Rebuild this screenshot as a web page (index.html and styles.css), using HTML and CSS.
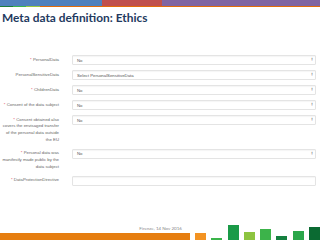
FILE: index.html
```html
<!DOCTYPE html>
<html lang="en">
<head>
    <meta charset="UTF-8">
    <meta name="viewport" content="width=device-width, initial-scale=1.0">
    <title>Meta data definition: Ethics</title>
    <link rel="stylesheet" href="styles.css">
</head>
<body>
    <div class="slide">
        <div class="topbar">
            <div class="seg blue"></div>
            <div class="seg red"></div>
            <div class="seg purple"></div>
        </div>
        <div class="underline">
            <div class="ul-green"></div>
            <div class="ul-orange"></div>
        </div>

        <h1 class="title">Meta data definition: Ethics</h1>

        <div class="form">
            <div class="row">
                <label class="lbl"><span class="req">*</span> PersonalData</label>
                <div class="field select">No<span class="arrows">&#x2BC5;<br>&#x2BC6;</span></div>
            </div>
            <div class="row">
                <label class="lbl">PersonalSensitiveData</label>
                <div class="field select">Select PersonalSensitiveData<span class="arrows">&#x2BC5;<br>&#x2BC6;</span></div>
            </div>
            <div class="row">
                <label class="lbl"><span class="req">*</span> ChildrenData</label>
                <div class="field select">No<span class="arrows">&#x2BC5;<br>&#x2BC6;</span></div>
            </div>
            <div class="row">
                <label class="lbl"><span class="req">*</span> Consent of the data subject</label>
                <div class="field select">No<span class="arrows">&#x2BC5;<br>&#x2BC6;</span></div>
            </div>
            <div class="row">
                <label class="lbl"><span class="req">*</span> Consent obtained also<br>covers the envisaged transfer<br>of the personal data outside<br>the EU</label>
                <div class="field select">No<span class="arrows">&#x2BC5;<br>&#x2BC6;</span></div>
            </div>
            <div class="row">
                <label class="lbl"><span class="req">*</span> Personal data was<br>manifestly made public by the<br>data subject</label>
                <div class="field select">No<span class="arrows">&#x2BC5;<br>&#x2BC6;</span></div>
            </div>
            <div class="row">
                <label class="lbl"><span class="req">*</span> DataProtectionDirective</label>
                <div class="field text"></div>
            </div>
        </div>

        <div class="footer">
            <div class="footer-left">
                <p class="date">Firenze, 14 Nov 2016</p>
                <div class="orange-bar"></div>
            </div>
            <div class="bars">
                <div class="bar b1"></div>
                <div class="bar b2"></div>
                <div class="bar b3"></div>
                <div class="bar b4"></div>
                <div class="bar b5"></div>
                <div class="bar b6"></div>
                <div class="bar b7"></div>
                <div class="bar b8"></div>
            </div>
        </div>
    </div>
</body>
</html>
```

FILE: styles.css
```css
body {
    margin: 0;
    background: white;
    font-family: 'Liberation Sans', Arial, sans-serif;
}

.slide {
    width: 320px;
    height: 240px;
    display: flex;
    flex-direction: column;
    overflow: hidden;
}

.topbar {
    display: flex;
    height: 6px;
}

.seg.blue {
    width: 102px;
    background: #4f81bd;
}

.seg.red {
    width: 60px;
    background: #c0504d;
}

.seg.purple {
    flex: 1;
    background: #8064a2;
}

.underline {
    display: flex;
    height: 1px;
}

.ul-green {
    width: 40px;
    background: linear-gradient(to right, #1e7b3a 0 13px, #3cb44b 13px 26px, #9bc93f 26px 40px);
}

.ul-orange {
    flex: 1;
    background: #e36c09;
}

.title {
    margin: 3px 0 0 2px;
    font-family: 'Lato', sans-serif;
    font-weight: bold;
    font-size: 11.9px;
    line-height: 15px;
    color: #1f3a60;
}

.form {
    margin-top: 30px;
    padding: 0 4px 0 1px;
}

.row {
    display: grid;
    grid-template-columns: 58px 1fr;
    column-gap: 13px;
    margin-bottom: 5px;
}

.lbl {
    text-align: right;
    font-size: 4.3px;
    line-height: 6.8px;
    padding-top: 1.5px;
    color: #666;
    white-space: nowrap;
}

.req {
    color: #e0405a;
}

.field {
    height: 8px;
    border: 1px solid #e4e4e4;
    border-radius: 1px;
    box-shadow: inset 0 1px 1px rgba(0, 0, 0, 0.04);
    display: flex;
    align-items: center;
    padding-left: 4px;
    font-size: 4.3px;
    color: #555;
}

.arrows {
    margin-left: auto;
    margin-right: 2px;
    font-family: 'DejaVu Sans', sans-serif;
    font-size: 2.5px;
    line-height: 2px;
    color: #777;
    text-align: center;
}

.footer {
    margin-top: auto;
    display: flex;
    align-items: flex-end;
}

.footer-left {
    width: 190px;
}

.date {
    margin: 0 8px 2px 0;
    text-align: right;
    font-family: 'Lato', sans-serif;
    font-size: 4.5px;
    color: #8a8a8a;
}

.orange-bar {
    height: 7px;
    background: #e67e10;
}

.bars {
    display: flex;
    align-items: flex-end;
    gap: 5.3px;
    margin-left: 5px;
}

.bar {
    width: 11px;
}

.b1 { height: 7px; background: #f39322; }
.b2 { height: 2px; background: #3bb44a; }
.b3 { height: 15px; background: #1a9a48; }
.b4 { height: 8px; background: #8dc440; }
.b5 { height: 11px; background: #3cb34a; }
.b6 { height: 4px; background: #15803f; }
.b7 { height: 9px; background: #2ba64a; }
.b8 { height: 13px; background: #0b6a32; }
```
